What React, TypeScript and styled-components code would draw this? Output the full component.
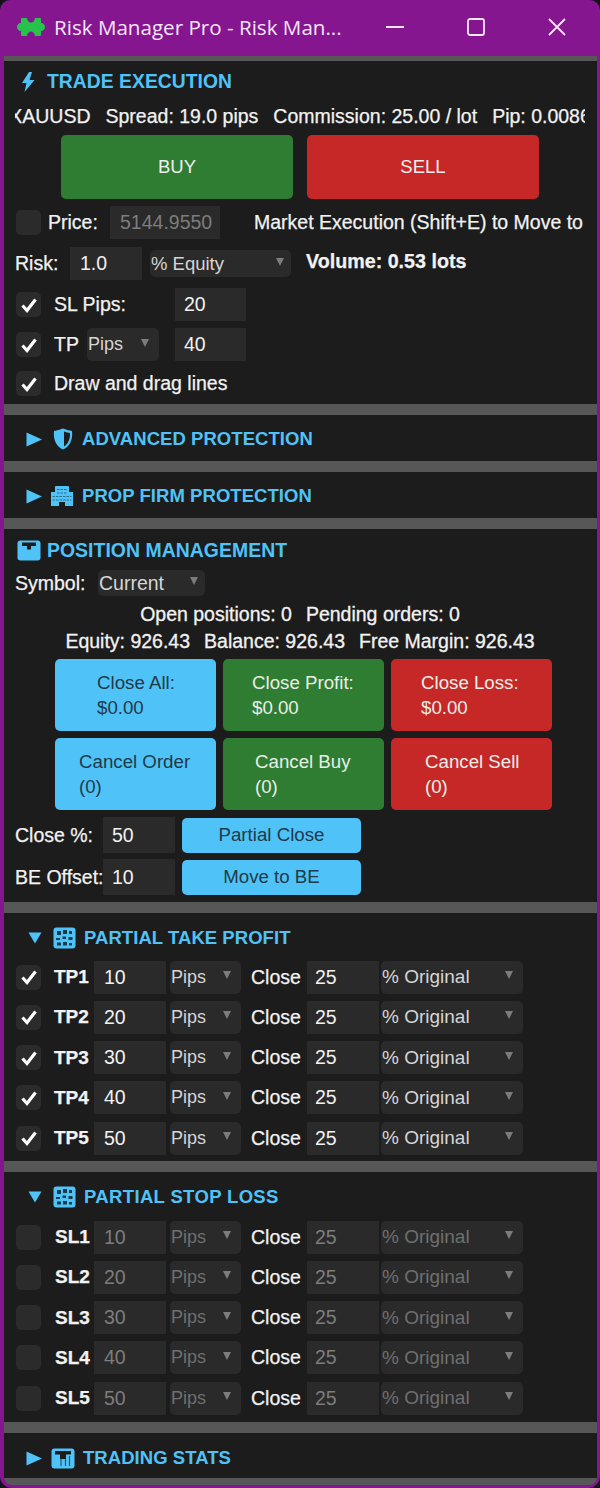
import React from 'react'
import styled, { createGlobalStyle } from 'styled-components'

const BLUE = '#4fc3f7'
const GREEN = '#2e7d32'
const RED = '#c62828'
const FIELD = '#2a2a2a'
const PANEL = '#1c1c1c'
const SANS = '"Liberation Sans", Arial, sans-serif'

const Global = createGlobalStyle`
  html, body { margin: 0; padding: 0; background: #14121a; }
  * { box-sizing: border-box; }
`

const Win = styled.div`
  width: 600px;
  height: 1488px;
  background: #86168f;
  border-radius: 10px 10px 12px 12px;
  padding: 0 3px 3px 4px;
  display: flex;
  flex-direction: column;
  overflow: hidden;
  font-family: ${SANS};
  font-size: 19.5px;
  color: #f2f2f2;
`
const TitleBar = styled.div`
  height: 56px;
  flex: none;
  display: flex;
  align-items: center;
  padding: 0 0 2px 17px;
  margin-left: -4px;
`
const TitleText = styled.div`
  font-family: "Open Sans", "Noto Sans", sans-serif;
  font-size: 20.6px;
  color: #f3e6f5;
  margin-left: 9px;
  width: 290px;
  white-space: nowrap;
`
const WinControls = styled.div`
  margin-left: 10px;
  display: flex;
  align-items: center;
`
const WinBtn = styled.div`
  width: 81px;
  display: flex;
  justify-content: center;
  align-items: center;
`
const Stack = styled.div`
  flex: 1;
  display: flex;
  flex-direction: column;
  background: #575757;
  padding-top: 5px;
  gap: 11px;
  border-radius: 0 0 8px 8px;
  overflow: hidden;
`
const Section = styled.section<{ $h: number; $pt?: number }>`
  height: ${p => p.$h}px;
  flex: none;
  background: ${PANEL};
  padding: ${p => p.$pt ?? 9}px 0 0 11px;
  display: flex;
  flex-direction: column;
`
const Head = styled.div<{ $ml?: number; $fs?: number; $ls?: number }>`
  height: 24px;
  flex: none;
  display: flex;
  align-items: center;
  margin-left: ${p => p.$ml ?? 0}px;
  color: ${BLUE};
  font-weight: 700;
  font-size: ${p => p.$fs ?? 18.5}px;
  letter-spacing: ${p => p.$ls ?? 0.05}px;
  white-space: nowrap;
`
const HeadIcon = styled.span<{ $w: number; $mr: number }>`
  width: ${p => p.$w}px;
  margin-right: ${p => p.$mr}px;
  display: flex;
  flex: none;
  justify-content: center;
`
const Ticker = styled.div`
  margin: 10px 0 0 0;
  width: 570px;
  height: 24px;
  display: flex;
  justify-content: center;
  align-items: center;
  gap: 15px;
  overflow: hidden;
  white-space: nowrap;
  flex: none;
  -webkit-text-stroke: 0.25px #f2f2f2;
  & > span { flex: none; }
`
const Row = styled.div<{ $mt?: number; $h?: number }>`
  margin-top: ${p => p.$mt ?? 7}px;
  height: ${p => p.$h ?? 33}px;
  flex: none;
  display: flex;
  align-items: center;
  white-space: nowrap;
`
const Label = styled.span<{ $w?: number; $ml?: number; $bold?: boolean; $fs?: number; $up?: number }>`
  width: ${p => (p.$w ? `${p.$w}px` : 'auto')};
  margin-left: ${p => p.$ml ?? 0}px;
  margin-bottom: ${p => p.$up ?? 0}px;
  font-weight: ${p => (p.$bold ? 700 : 400)};
  font-size: ${p => p.$fs ?? 19.5}px;
  flex: none;
  white-space: nowrap;
  -webkit-text-stroke: 0.25px #f2f2f2;
`
const Input = styled.div<{ $w: number; $ml?: number; $dim?: boolean; $h?: number; $pl?: number }>`
  width: ${p => p.$w}px;
  height: ${p => p.$h ?? 33}px;
  margin-left: ${p => p.$ml ?? 0}px;
  background: ${FIELD};
  color: ${p => (p.$dim ? '#7d7d7d' : '#f2f2f2')};
  padding-left: ${p => p.$pl ?? 9}px;
  display: flex;
  align-items: center;
  flex: none;
`
const Select = styled.div<{ $w: number; $ml?: number; $dim?: boolean; $h?: number; $arrow?: number; $fs?: number }>`
  position: relative;
  width: ${p => p.$w}px;
  height: ${p => p.$h ?? 33}px;
  margin-left: ${p => p.$ml ?? 0}px;
  border-radius: 5px;
  background: ${FIELD};
  color: ${p => (p.$dim ? '#6f6f6f' : '#d6d6d6')};
  font-size: ${p => p.$fs ?? 18}px;
  padding-left: 1px;
  display: flex;
  align-items: center;
  flex: none;
  &::after {
    content: '';
    position: absolute;
    right: ${p => p.$arrow ?? 10}px;
    top: 50%;
    margin-top: -6px;
    border-left: 4px solid transparent;
    border-right: 4px solid transparent;
    border-top: 8px solid #7c7c7c;
  }
`
const Check = styled.div<{ $ml?: number }>`
  width: 25px;
  height: 25px;
  margin-left: ${p => p.$ml ?? 1}px;
  border-radius: 5px;
  background: #2b2b2b;
  flex: none;
  display: flex;
  align-items: center;
  justify-content: center;
`
const Big = styled.button<{ $bg: string; $w: number; $ml: number }>`
  width: ${p => p.$w}px;
  height: 64px;
  margin-left: ${p => p.$ml}px;
  border: 0;
  border-radius: 5px;
  background: ${p => p.$bg};
  color: #eee;
  font-family: ${SANS};
  font-size: 18.5px;
  flex: none;
`
const Center = styled.div<{ $mt: number }>`
  width: 570px;
  margin-top: ${p => p.$mt}px;
  height: 24px;
  flex: none;
  display: flex;
  justify-content: center;
  gap: 14px;
  white-space: nowrap;
  align-items: center;
  -webkit-text-stroke: 0.3px #f2f2f2;
`
const Grid = styled.div`
  margin: 6px 0 0 40px;
  display: grid;
  grid-template-columns: repeat(3, 161px);
  grid-auto-rows: 72px;
  column-gap: 7px;
  row-gap: 7px;
`
const ActionBtn = styled.button<{ $bg: string; $dark?: boolean; $pl: number }>`
  border: 0;
  border-radius: 5px;
  background: ${p => p.$bg};
  color: ${p => (p.$dark ? '#1f3a4a' : '#e8efe8')};
  font-family: ${SANS};
  font-size: 18.7px;
  line-height: 25px;
  padding: 0 0 0 ${p => p.$pl}px;
  text-align: left;
  white-space: pre-line;
`
const WideBtn = styled.button`
  width: 179px;
  height: 35px;
  margin-left: 7px;
  border: 0;
  border-radius: 5px;
  background: ${BLUE};
  color: #1f3a4a;
  font-family: ${SANS};
  font-size: 18.7px;
  flex: none;
`

const Tick = () => (
  <svg width="18" height="18" viewBox="0 0 18 18">
    <path d="M2.5 9.5 L7 14.5 L15.5 3.5" fill="none" stroke="#fff" strokeWidth="3.2" />
  </svg>
)
const Tri = ({ open }: { open?: boolean }) =>
  open ? (
    <svg width="14" height="12" viewBox="0 0 14 12">
      <path d="M0.5 0.5 H13.5 L7 11.5 Z" fill={BLUE} />
    </svg>
  ) : (
    <svg width="16" height="15" viewBox="0 0 16 15">
      <path d="M0.5 0.5 L16 7.5 L0.5 14.5 Z" fill={BLUE} />
    </svg>
  )
const Bolt = () => (
  <svg width="14" height="20" viewBox="0 0 14 20">
    <path d="M8 0 L1 11 H5.5 L3.5 20 L13.5 8 H8.5 L11 0 Z" fill={BLUE} />
  </svg>
)
const Shield = () => (
  <svg width="20" height="22" viewBox="0 0 20 22">
    <path d="M10 0.5 C13 1.5 16 2.5 19 3 C20 11 17 18.5 10 21.5 C3 18.5 0 11 1 3 C4 2.5 7 1.5 10 0.5 Z" fill={BLUE} />
    <path d="M11 3.5 C13 4.2 15 4.8 17 5 C17.4 11 15 16 11 18.5 Z" fill={PANEL} />
  </svg>
)
const Building = () => (
  <svg width="22" height="20" viewBox="0 0 22 20">
    <path d="M0 6 H4 V1 Q4 0 5 0 H17 Q18 0 18 1 V6 H22 V20 H14 V16 H8 V20 H0 Z" fill={BLUE} />
    <path d="M6 3.5 H16 M6 7 H16 M1.5 10.5 H20.5 M1.5 14 H20.5" stroke="#2a6f90" strokeWidth="1" strokeDasharray="2.5 1" />
  </svg>
)
const BoxIcon = () => (
  <svg width="24" height="21" viewBox="0 0 24 21">
    <rect x="0.5" y="0.5" width="23" height="20" rx="3" fill={BLUE} />
    <path d="M5 2.5 H19 V6 H14 V9.5 H10 V6 H5 Z" fill={PANEL} />
  </svg>
)
const GridIcon = () => (
  <svg width="23" height="22" viewBox="0 0 23 22">
    <rect x="0.5" y="0.5" width="22" height="21" rx="3" fill={BLUE} />
    <path d="M4 4 H8 V8 H4 Z M10 3 H14 V7 H10 Z M16 4 H19 V7 H16 Z M3 11 H7 V13 H3 Z M9.5 9.5 H13 V12 H9.5 Z M15.5 10 H19.5 V13 H15.5 Z M4 15.5 H8 V18.5 H4 Z M10 15 H14 V18.5 H10 Z M16 16 H19 V18.5 H16 Z" fill="#173a4c" />
  </svg>
)
const StatsIcon = () => (
  <svg width="24" height="21" viewBox="0 0 24 21">
    <rect x="0.5" y="0.5" width="23" height="20" rx="3" fill={BLUE} />
    <path d="M4 3 H20 V6.5 H15 V11 H9 V6.5 H4 Z" fill={PANEL} />
    <path d="M10 11 V18 M14.5 11 V18 M18.5 8 V18" stroke="#20586f" strokeWidth="1.2" />
  </svg>
)
const Puzzle = () => (
  <svg width="28" height="20" viewBox="0 0 28 20">
    <path d="M4 2 Q4 1 5 1 H10 C10.5 4 12 5.5 14 5.5 C16 5.5 17.5 4 18 1 H23 Q24 1 24 2 V6 C26.5 6 28 8 28 10 C28 12 26.5 14 24 14 V18 Q24 19 23 19 H18 C17.5 16 16 14.5 14 14.5 C12 14.5 10.5 16 10 19 H5 Q4 19 4 18 V14 C1.5 14 0 12 0 10 C0 8 1.5 6 4 6 Z" fill="#27c24c" />
  </svg>
)

type LevelProps = { name: string; value: number; on: boolean }
const Level = ({ name, value, on }: LevelProps) => (
  <Row $h={33} $mt={7.25}>
    <Check>{on && <Tick />}</Check>
    <Label $w={39} $ml={on ? 13 : 14} $bold $fs={19}>
      {name}
    </Label>
    <Input $w={72} $ml={on ? 1 : 0} $dim={!on} $pl={10}>
      {value}
    </Input>
    <Select $w={71} $ml={4} $dim={!on}>
      Pips
    </Select>
    <Label $ml={10} $w={56}>
      Close
    </Label>
    <Input $w={72} $dim={!on} $pl={8}>
      25
    </Input>
    <Select $w={142} $ml={2} $dim={!on} $fs={19}>
      % Original
    </Select>
  </Row>
)

const levels = [10, 20, 30, 40, 50]

export default function App() {
  return (
    <Win>
      <Global />
      <TitleBar>
        <Puzzle />
        <TitleText>Risk Manager Pro - Risk Man...</TitleText>
        <WinControls>
          <WinBtn>
            <svg width="18" height="4" viewBox="0 0 18 4">
              <path d="M0 2 H18" stroke="#f3e6f5" strokeWidth="2" />
            </svg>
          </WinBtn>
          <WinBtn>
            <svg width="18" height="18" viewBox="0 0 18 18">
              <rect x="1" y="1" width="16" height="16" rx="2" fill="none" stroke="#f3e6f5" strokeWidth="1.8" />
            </svg>
          </WinBtn>
          <WinBtn>
            <svg width="18" height="18" viewBox="0 0 18 18">
              <path d="M1 1 L17 17 M17 1 L1 17" stroke="#f3e6f5" strokeWidth="1.8" />
            </svg>
          </WinBtn>
        </WinControls>
      </TitleBar>
      <Stack>
        <Section $h={343}>
          <Head $ml={6} $fs={19.3}>
            <HeadIcon $w={14} $mr={12}>
              <Bolt />
            </HeadIcon>
            TRADE EXECUTION
          </Head>
          <Ticker>
            <span>XAUUSD</span>
            <span>Spread: 19.0 pips</span>
            <span>Commission: 25.00 / lot</span>
            <span>Pip: 0.0086</span>
          </Ticker>
          <Row $h={64}>
            <Big $bg={GREEN} $w={232} $ml={46}>BUY</Big>
            <Big $bg={RED} $w={232} $ml={14}>SELL</Big>
          </Row>
          <Row>
            <Check />
            <Label $ml={7} $w={62}>Price:</Label>
            <Input $w={110} $dim $pl={10}>5144.9550</Input>
            <Label $ml={34}>Market Execution (Shift+E) to Move to</Label>
          </Row>
          <Row $mt={8}>
            <Label $w={55}>Risk:</Label>
            <Input $w={72} $pl={10}>1.0</Input>
            <Select $w={141} $ml={8} $h={27} $arrow={7} $fs={18.5}>% Equity</Select>
            <Label $ml={15} $bold $fs={19.7} $up={4}>Volume: 0.53 lots</Label>
          </Row>
          <Row $mt={8}>
            <Check><Tick /></Check>
            <Label $ml={13} $w={121}>SL Pips:</Label>
            <Input $w={71}>20</Input>
          </Row>
          <Row>
            <Check><Tick /></Check>
            <Label $ml={13} $w={33}>TP</Label>
            <Select $w={72}>Pips</Select>
            <Input $w={71} $ml={16}>40</Input>
          </Row>
          <Row $mt={6}>
            <Check><Tick /></Check>
            <Label $ml={13}>Draw and drag lines</Label>
          </Row>
        </Section>
        <Section $h={46} $pt={12}>
          <Head $ml={11}>
            <HeadIcon $w={16} $mr={11}><Tri /></HeadIcon>
            <HeadIcon $w={20} $mr={9}><Shield /></HeadIcon>
            ADVANCED PROTECTION
          </Head>
        </Section>
        <Section $h={46} $pt={12}>
          <Head $ml={11}>
            <HeadIcon $w={16} $mr={9}><Tri /></HeadIcon>
            <HeadIcon $w={22} $mr={9}><Building /></HeadIcon>
            PROP FIRM PROTECTION
          </Head>
        </Section>
        <Section $h={373} $pt={9}>
          <Head $ml={2} $fs={19.4}>
            <HeadIcon $w={24} $mr={6}><BoxIcon /></HeadIcon>
            POSITION MANAGEMENT
          </Head>
          <Row $mt={8} $h={26}>
            <Label $w={83}>Symbol:</Label>
            <Select $w={107} $h={26} $arrow={7} $fs={19.5}>Current</Select>
          </Row>
          <Center $mt={6}>
            <span>Open positions: 0</span>
            <span>Pending orders: 0</span>
          </Center>
          <Center $mt={3}>
            <span>Equity: 926.43</span>
            <span>Balance: 926.43</span>
            <span>Free Margin: 926.43</span>
          </Center>
          <Grid>
            <ActionBtn $bg={BLUE} $dark $pl={42}>{'Close All:\n$0.00'}</ActionBtn>
            <ActionBtn $bg={GREEN} $pl={29}>{'Close Profit:\n$0.00'}</ActionBtn>
            <ActionBtn $bg={RED} $pl={30}>{'Close Loss:\n$0.00'}</ActionBtn>
            <ActionBtn $bg={BLUE} $dark $pl={24}>{'Cancel Order\n(0)'}</ActionBtn>
            <ActionBtn $bg={GREEN} $pl={32}>{'Cancel Buy\n(0)'}</ActionBtn>
            <ActionBtn $bg={RED} $pl={34}>{'Cancel Sell\n(0)'}</ActionBtn>
          </Grid>
          <Row $mt={7} $h={36}>
            <Label $w={88}>Close %:</Label>
            <Input $w={72} $h={36}>50</Input>
            <WideBtn>Partial Close</WideBtn>
          </Row>
          <Row $mt={6} $h={36}>
            <Label $w={88}>BE Offset:</Label>
            <Input $w={72} $h={36}>10</Input>
            <WideBtn>Move to BE</WideBtn>
          </Row>
        </Section>
        <Section $h={248} $pt={13}>
          <Head $ml={13}>
            <HeadIcon $w={14} $mr={11}><Tri open /></HeadIcon>
            <HeadIcon $w={23} $mr={8}><GridIcon /></HeadIcon>
            PARTIAL TAKE PROFIT
          </Head>
          <Row $mt={3.25} $h={0} />
          {levels.map((v, i) => (
            <Level key={v} name={`TP${i + 1}`} value={v} on />
          ))}
        </Section>
        <Section $h={250} $pt={13}>
          <Head $ml={13} $ls={0.35}>
            <HeadIcon $w={14} $mr={11}><Tri open /></HeadIcon>
            <HeadIcon $w={23} $mr={8}><GridIcon /></HeadIcon>
            PARTIAL STOP LOSS
          </Head>
          <Row $mt={4.25} $h={0} />
          {levels.map((v, i) => (
            <Level key={v} name={`SL${i + 1}`} value={v} on={false} />
          ))}
        </Section>
        <Section $h={45} $pt={13}>
          <Head $ml={11}>
            <HeadIcon $w={16} $mr={9}><Tri /></HeadIcon>
            <HeadIcon $w={24} $mr={8}><StatsIcon /></HeadIcon>
            TRADING STATS
          </Head>
        </Section>
      </Stack>
    </Win>
  )
}
